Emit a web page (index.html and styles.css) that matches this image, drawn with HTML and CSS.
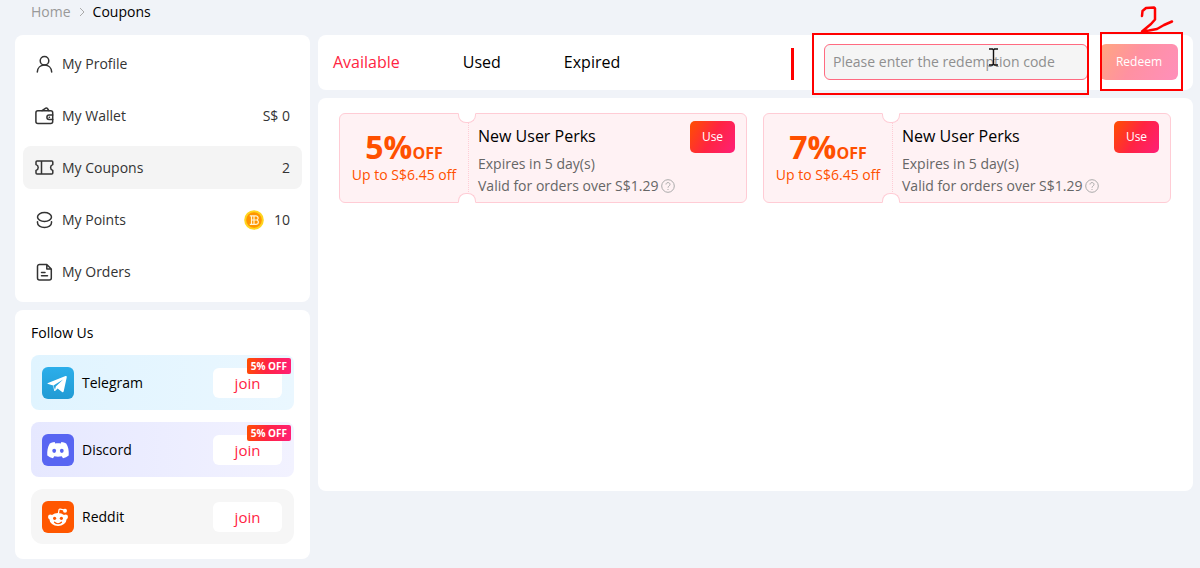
FILE: index.html
```html
<!DOCTYPE html>
<html lang="en">
<head>
  <meta charset="utf-8">
  <meta name="viewport" content="width=device-width, initial-scale=1">
  <title>Coupons</title>
  <link rel="stylesheet" href="styles.css">
</head>
<body>
  <nav class="breadcrumb" aria-label="Breadcrumb">
    <a href="#">Home</a>
    <svg width="6" height="10" viewBox="0 0 6 10"><path d="M1 1l4 4-4 4"/></svg>
    <span>Coupons</span>
  </nav>

  <div class="layout">
    <aside class="sidebar">
      <nav class="card menu" aria-label="Account">
        <a class="menu-item" href="#">
          <svg class="icon" viewBox="0 0 20 20"><circle cx="10.500" cy="6.700" r="4.300"/><path d="M3.300 18c.2-4.100 3.200-6.900 7.200-6.900s7 2.800 7.200 6.900"/></svg>
          <span class="menu-name">My Profile</span>
        </a>
        <a class="menu-item" href="#">
          <svg class="icon" viewBox="0 0 20 20"><rect x="1.900" y="4.800" width="16.800" height="12.800" rx="2"/><path d="M8 4.700l3.800-2.500c.6-.3 1.200-.2 1.600.3l1.500 2.200M18.700 9h-3.600a2.200 2.200 0 0 0 0 4.400h3.600M15.200 11.200h.3"/></svg>
          <span class="menu-name">My Wallet</span>
          <span>S$ 0</span>
        </a>
        <a class="menu-item active" href="#">
          <svg class="icon" viewBox="0 0 20 20"><path d="M3 3h14.800c.6 0 1 .4 1 1v2.600c-1.300.4-2.200 1.500-2.200 2.900s.9 2.500 2.200 2.900V15c0 .6-.4 1-1 1H3c-.6 0-1-.4-1-1v-2.600c1.300-.4 2.200-1.500 2.200-2.900S3.300 7 2 6.600V4c0-.6.4-1 1-1zM7.500 3v13"/></svg>
          <span class="menu-name">My Coupons</span>
          <span>2</span>
        </a>
        <a class="menu-item" href="#">
          <svg class="icon" viewBox="0 0 20 20"><ellipse cx="10.500" cy="7" rx="7" ry="4.500"/><path d="M3.500 11.800v.9c0 2.800 3.100 4.800 7 4.800s7-2 7-4.800v-.9"/></svg>
          <span class="menu-name">My Points</span>
          <svg class="coin" viewBox="0 0 20 20"><circle cx="10" cy="10" r="9.800" fill="#ffd51f"/><circle cx="10" cy="10" r="7.800" fill="#ff9500"/><path d="M5.800 5.800h5.800c3.200 0 3.200 4 .8 4.200 2.800.2 2.600 4.400-.6 4.400h-6M7.500 5.800v8.600M10 5.800v8.600M7.500 10h5" fill="none" stroke="#fff4d6" stroke-width="1.200"/></svg>
          <span>10</span>
        </a>
        <a class="menu-item" href="#">
          <svg class="icon" viewBox="0 0 20 20"><path d="M12.800 2.500H5.500a2 2 0 0 0-2 2v11.500a2 2 0 0 0 2 2h9.800a2 2 0 0 0 2-2V7zM12.800 2.700V7h4.300M7.500 10.500h3.500M7.500 13.700h6"/></svg>
          <span class="menu-name">My Orders</span>
        </a>
      </nav>

      <section class="card follow">
        <h2>Follow Us</h2>
        <div class="social telegram">
          <svg class="logo" viewBox="0 0 32 32"><defs><linearGradient id="tg" x2="0" y2="1"><stop stop-color="#2caeea"/><stop offset="1" stop-color="#229bd4"/></linearGradient></defs><rect width="32" height="32" rx="6" fill="url(#tg)"/><path d="M6 16l17.500-6.900c.8-.3 1.500.2 1.200 1.400l-3 13.700c-.2 1-.8 1.200-1.600.8l-4.500-3.400-2.300 2.200c-.4.400-1.100.2-1.200-.4l-.9-4.800-5-1.600c-1-.3-1-.7-.2-1z" fill="#fff"/><path d="M11.500 18.500l9.600-6.100-7.300 7-.8 3.700" fill="#29a6e0"/></svg>
          <span class="social-name">Telegram</span>
          <button class="join" type="button">join</button>
          <span class="badge">5% OFF</span>
        </div>
        <div class="social discord">
          <svg class="logo" viewBox="0 0 32 32"><rect width="32" height="32" rx="6" fill="#5865f2"/><path d="M12.600 8c-1.800.3-3.400.8-4.800 1.500C5.600 13 5 17 5.300 21.500c1.700 1.300 3.600 2.200 5.700 2.700l1.300-2c2.500.6 4.900.6 7.400 0l1.300 2c2.100-.5 4-1.400 5.700-2.700.4-5-.5-8.700-2.500-12C22.800 8.800 21.200 8.300 19.400 8l-.7 1.400c-1.800-.3-3.600-.3-5.400 0z" fill="#fff"/><ellipse cx="12.200" cy="16.800" rx="1.900" ry="2.100" fill="#5865f2"/><ellipse cx="19.800" cy="16.800" rx="1.900" ry="2.100" fill="#5865f2"/></svg>
          <span class="social-name">Discord</span>
          <button class="join" type="button">join</button>
          <span class="badge">5% OFF</span>
        </div>
        <div class="social reddit">
          <svg class="logo" viewBox="0 0 32 32"><rect width="32" height="32" rx="6" fill="#ff5700"/><g fill="#fff"><ellipse cx="16" cy="18.500" rx="8.500" ry="6.500"/><circle cx="8.400" cy="16" r="2.400"/><circle cx="23.600" cy="16" r="2.400"/><circle cx="23" cy="9.800" r="2"/></g><path d="M16.300 13l.7-4c.1-.8.600-1 1.300-.9l4.300 1" fill="none" stroke="#fff" stroke-width="1.300"/><circle cx="12.600" cy="17.300" r="1.600" fill="#ff5700"/><circle cx="19.400" cy="17.300" r="1.600" fill="#ff5700"/><path d="M12.500 21.200c2 1.900 5 1.900 7 0" fill="none" stroke="#ff5700" stroke-width="1.200" stroke-linecap="round"/></svg>
          <span class="social-name">Reddit</span>
          <button class="join" type="button">join</button>
        </div>
      </section>
    </aside>

    <main class="main">
      <header class="card toolbar">
        <div class="tabs">
          <button class="tab active" type="button">Available</button>
          <button class="tab" type="button">Used</button>
          <button class="tab" type="button">Expired</button>
        </div>
        <form class="redeem">
          <div class="code">
            <input type="text" aria-label="Redemption code" placeholder="Please enter the redemption code">
            <div class="mark mark-code"></div>
            <div class="mark-one"></div>
            <svg class="cursor" viewBox="0 0 11 18"><path d="M1 1h3.500l1 1 1-1H10M1 17h3.500l1-1 1 1H10M5.500 2v14"/></svg>
          </div>
          <div class="submit">
            <button type="button">Redeem</button>
            <div class="mark mark-submit"></div>
            <svg class="mark-two" viewBox="0 0 36 30"><path d="M3 11l.5-5L7 3l8-.5 1 1v11L12 19l-6 5-3 2.500 7-1 8-1.500 7-4 8-3.500"/></svg>
          </div>
        </form>
      </header>

      <section class="card coupons">
        <article class="coupon">
          <div class="discount">
            <div class="amount">5%<small>OFF</small></div>
            <div class="limit">Up to S$6.45 off</div>
          </div>
          <div class="details">
            <h3>New User Perks</h3>
            <p>Expires in 5 day(s)</p>
            <p>Valid for orders over S$1.29
              <svg class="help" viewBox="0 0 14 14"><circle cx="7" cy="7" r="6.300"/><path d="M5 5.500c0-2.600 4-2.500 4-.1C9 7 7 7 7 8.700M7 10v1"/></svg>
            </p>
          </div>
          <button class="use" type="button">Use</button>
        </article>
        <article class="coupon">
          <div class="discount">
            <div class="amount">7%<small>OFF</small></div>
            <div class="limit">Up to S$6.45 off</div>
          </div>
          <div class="details">
            <h3>New User Perks</h3>
            <p>Expires in 5 day(s)</p>
            <p>Valid for orders over S$1.29
              <svg class="help" viewBox="0 0 14 14"><circle cx="7" cy="7" r="6.300"/><path d="M5 5.500c0-2.600 4-2.500 4-.1C9 7 7 7 7 8.700M7 10v1"/></svg>
            </p>
          </div>
          <button class="use" type="button">Use</button>
        </article>
      </section>
    </main>
  </div>
</body>
</html>
```
FILE: styles.css
```css
* {
    box-sizing: border-box;
}
body {
    margin: 0;
    padding: 0 7px 8px 15px;
    background: #f0f3f8;
    color: #000;
    font-family: "Open Sans", "Noto Sans", sans-serif;
    font-size: 14px;
    line-height: 20px;
}
a {
    color: inherit;
    text-decoration: none;
}
button, input {
    font: inherit;
}
button {
    border: 0;
    padding: 0;
    cursor: pointer;
}
h2, h3, p {
    margin: 0;
    font-size: 14px;
    font-weight: 400;
}
svg {
    flex: none;
}
.card {
    background: #fff;
    border-radius: 8px;
}
.breadcrumb {
    display: flex;
    align-items: center;
    gap: 8px;
    height: 35px;
    padding: 0 16px 12px;
}
.breadcrumb a {
    color: #999;
}
.breadcrumb svg {
    fill: none;
    stroke: #aaa;
}
.layout {
    display: flex;
    align-items: flex-start;
    gap: 8px;
}

/* sidebar */
.sidebar {
    flex: none;
    width: 295px;
    display: flex;
    flex-direction: column;
    gap: 8px;
}
.menu {
    display: flex;
    flex-direction: column;
    gap: 9px;
    padding: 7px 8px 9px;
}
.menu-item {
    display: flex;
    align-items: center;
    height: 43px;
    padding: 0 12px 0 11px;
    border-radius: 8px;
    color: #333;
}
.menu-item.active {
    background: #f4f4f4;
}
.menu-name {
    flex: 1;
    padding-left: 8px;
}
.icon {
    width: 20px;
    height: 20px;
    fill: none;
    stroke: #333;
    stroke-width: 1.5;
    stroke-linecap: round;
    stroke-linejoin: round;
}
.coin {
    width: 20px;
    height: 20px;
    margin-right: 10px;
}
.follow {
    display: flex;
    flex-direction: column;
    gap: 12px;
    padding: 13px 16px 15px;
}
.social {
    position: relative;
    display: flex;
    align-items: center;
    height: 55px;
    padding: 0 12px 0 11px;
    border-radius: 8px;
}
.telegram {
    background: linear-gradient(90deg, #e0f4ff, #eaf7ff);
}
.discord {
    background: linear-gradient(90deg, #e6e8ff, #f2f2ff);
}
.reddit {
    background: #f6f6f6;
    border-radius: 12px;
}
.logo {
    width: 32px;
    height: 32px;
}
.social-name {
    flex: 1;
    padding-left: 8px;
}
.join {
    width: 69px;
    height: 30px;
    border-radius: 6px;
    background: #fff;
    color: #ff2442;
    font-size: 15px;
}
.badge {
    position: absolute;
    top: 3px;
    right: 3px;
    padding: 0 4px;
    border-radius: 2px;
    background: linear-gradient(100deg, #ff5000, #ff2442 45%, #ff1f78);
    color: #fff;
    font-size: 10px;
    font-weight: 700;
    line-height: 16px;
}

/* tabs and redemption form */
.main {
    flex: 1;
    min-width: 0;
    display: flex;
    flex-direction: column;
    gap: 8px;
}
.toolbar {
    display: flex;
    align-items: center;
    justify-content: space-between;
    height: 55px;
    padding: 0 15px 2px;
}
.tabs {
    display: flex;
    gap: 63px;
}
.tab {
    background: none;
    font-size: 16px;
}
.tab.active {
    color: #ff2442;
}
.redeem {
    display: flex;
    gap: 12px;
}
.code, .submit {
    position: relative;
}
.code input {
    display: block;
    width: 264px;
    height: 36px;
    padding: 0 8px;
    border: 1px solid #ff6b81;
    border-radius: 6px;
    background: #f5f5f5;
    outline: none;
}
.code input::placeholder {
    color: #8f8f8f;
    opacity: 1;
}
.submit button {
    display: block;
    width: 78px;
    height: 36px;
    border-radius: 6px;
    background: linear-gradient(120deg, #ffa77f, #ff91a1 45%, #ff8fbb);
    color: #fff;
    font-size: 12px;
}

/* hand-drawn notes over the form */
.mark {
    position: absolute;
    border: 2px solid #f00;
    pointer-events: none;
}
.mark-code {
    inset: -11px -1px -15px -12px;
}
.mark-submit {
    inset: -12px -5px -11px 0;
}
.mark-one {
    position: absolute;
    top: 4px;
    left: -33px;
    width: 3px;
    height: 32px;
    background: #f00;
}
.mark-two {
    position: absolute;
    top: -39px;
    left: 39px;
    width: 36px;
    height: 30px;
    fill: none;
    stroke: #f00;
    stroke-width: 2.5;
    stroke-linecap: round;
    stroke-linejoin: round;
}
.cursor {
    position: absolute;
    top: 4px;
    left: 164px;
    width: 11px;
    height: 18px;
    fill: none;
    stroke: #111;
    stroke-width: 1.4;
}

/* coupon list */
.coupons {
    display: grid;
    grid-template-columns: 1fr 1fr;
    align-items: start;
    gap: 16px;
    min-height: 393px;
    padding: 15px 22px 15px 21px;
}
.coupon {
    position: relative;
    display: flex;
    height: 90px;
    border: 1px solid #ffccd5;
    border-radius: 6px;
    background: #fff2f4;
}
.discount {
    position: relative;
    flex: none;
    width: 129px;
    padding-top: 15px;
    border-right: 1px dotted #ffccd5;
    color: #ff5000;
    text-align: center;
}
.discount::before, .discount::after {
    content: "";
    position: absolute;
    right: -8px;
    width: 16px;
    height: 8px;
    border: 1px solid #ffccd5;
    background: #fff;
}
.discount::before {
    top: -1px;
    border-top-color: #fff;
    border-radius: 0 0 8px 8px;
}
.discount::after {
    bottom: -1px;
    border-bottom-color: #fff;
    border-radius: 8px 8px 0 0;
}
.amount {
    font-size: 32px;
    font-weight: 700;
    line-height: 36px;
}
.amount small {
    font-size: 16px;
    line-height: 16px;
}
.limit {
    line-height: 20px;
    white-space: nowrap;
}
.details {
    padding: 11px 0 0 9px;
    color: #666;
    line-height: 22px;
    white-space: nowrap;
}
.details h3 {
    margin-bottom: 6px;
    color: #000;
    font-size: 16px;
}
.details p {
    display: flex;
    align-items: center;
    gap: 2px;
}
.help {
    width: 14px;
    height: 14px;
    fill: none;
    stroke: #aaa;
}
.use {
    position: absolute;
    top: 7px;
    right: 11px;
    width: 45px;
    height: 32px;
    border-radius: 5px;
    background: linear-gradient(120deg, #ff5000, #ff2442 50%, #ff1f78);
    color: #fff;
    font-size: 12px;
}
```
